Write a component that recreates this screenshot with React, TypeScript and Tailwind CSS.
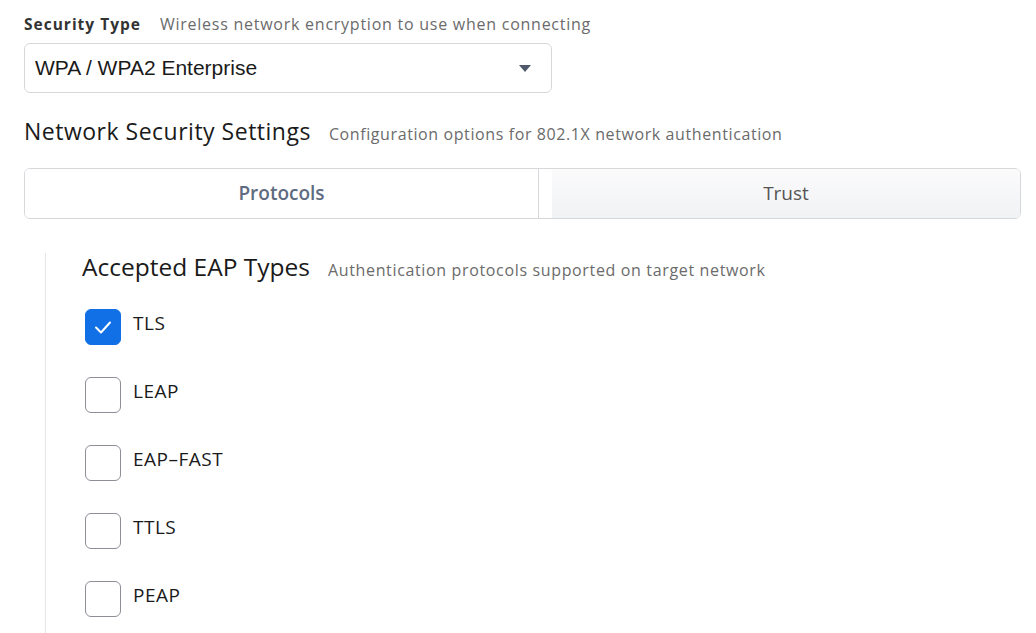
import React, { useState } from 'react';

const font = { fontFamily: '"Open Sans", Lato, sans-serif' };

const types = ['TLS', 'LEAP', 'EAP–FAST', 'TTLS', 'PEAP'];

function Checkbox({ checked, onChange }: { checked: boolean; onChange: () => void }) {
  return (
    <button
      onClick={onChange}
      className={`w-[36px] h-[36px] rounded-[6px] flex items-center justify-center shrink-0 ${
        checked ? 'bg-[#1170e6] border border-[#1170e6]' : 'bg-white border border-[#8c8f96]'
      }`}
    >
      {checked && (
        <svg width="22" height="22" viewBox="0 0 22 22" fill="none">
          <path d="M4 11.5l5 5 9-10" stroke="white" strokeWidth="2" strokeLinecap="round" strokeLinejoin="round" />
        </svg>
      )}
    </button>
  );
}

export default function App() {
  const [checked, setChecked] = useState<Record<string, boolean>>({ TLS: true });
  const [tab, setTab] = useState<'protocols' | 'trust'>('protocols');

  const active = 'bg-white text-[#5f6b80] font-semibold';
  const idle = 'bg-gradient-to-b from-[#fbfbfc] to-[#f1f2f4] text-[#555]';

  return (
    <div className="w-[1036px] h-[633px] overflow-hidden bg-white pl-[24px] pr-[15px] pt-[11px]" style={font}>
      <div className="flex items-baseline gap-[19px] leading-[26px]">
        <span className="text-[15.5px] font-bold text-[#333] tracking-[1px]">Security Type</span>
        <span className="text-[16px] text-[#6b6b6b] tracking-[0.75px]">Wireless network encryption to use when connecting</span>
      </div>

      <div className="mt-[6px] w-[528px] h-[50px] border border-[#d6d8dc] rounded-[6px] flex items-center justify-between pl-[10px] pr-[20px]">
        <span className="text-[21px] text-[#1a1a1a]" style={{ fontFamily: '"Liberation Sans", Arial, sans-serif' }}>
          WPA / WPA2 Enterprise
        </span>
        <svg width="12" height="7" viewBox="0 0 12 7">
          <path d="M0 0h12L6 7z" fill="#4f5a6b" />
        </svg>
      </div>

      <div className="mt-[23px] flex items-baseline gap-[18px] leading-[30px]">
        <span className="text-[23px] text-[#1a1a1a] tracking-[0.5px]">Network Security Settings</span>
        <span className="text-[16px] text-[#6b6b6b] tracking-[0.6px]">Configuration options for 802.1X network authentication</span>
      </div>

      <div className="mt-[19px] h-[51px] flex border border-[#d6d8dc] rounded-[6px] overflow-hidden">
        <button
          onClick={() => setTab('protocols')}
          className={`w-[514px] border-r border-[#d6d8dc] flex items-center justify-center text-[19px] ${
            tab === 'protocols' ? active : idle
          }`}
        >
          Protocols
        </button>
        <div className="flex-1 flex bg-white pl-[13px]">
          <button
            onClick={() => setTab('trust')}
            className={`flex-1 flex items-center justify-center text-[19px] ${tab === 'trust' ? active : idle}`}
          >
            Trust
          </button>
        </div>
      </div>

      <div className="mt-[34px] ml-[21px] border-l border-[#e6e6e6] pl-[36px] h-[400px]">
        <div className="flex items-baseline gap-[18px] leading-[28px]">
          <span className="text-[24.5px] text-[#1a1a1a]">Accepted EAP Types</span>
          <span className="text-[16px] text-[#6b6b6b] tracking-[0.65px]">Authentication protocols supported on target network</span>
        </div>
        <div className="mt-[25px] flex flex-col gap-[32px] pl-[3px]">
          {types.map((t) => (
            <label key={t} className="flex items-center gap-[12px]">
              <Checkbox checked={!!checked[t]} onChange={() => setChecked({ ...checked, [t]: !checked[t] })} />
              <span className="text-[19px] text-[#1a1a1a] tracking-[0.5px] -mt-[8px]">{t}</span>
            </label>
          ))}
        </div>
      </div>
    </div>
  );
}
